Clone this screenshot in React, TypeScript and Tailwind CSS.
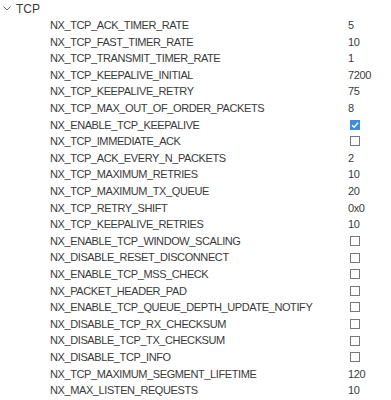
import React from 'react';

type Row = { name: string; value?: string; check?: boolean };

const rows: Row[] = [
  { name: 'NX_TCP_ACK_TIMER_RATE', value: '5' },
  { name: 'NX_TCP_FAST_TIMER_RATE', value: '10' },
  { name: 'NX_TCP_TRANSMIT_TIMER_RATE', value: '1' },
  { name: 'NX_TCP_KEEPALIVE_INITIAL', value: '7200' },
  { name: 'NX_TCP_KEEPALIVE_RETRY', value: '75' },
  { name: 'NX_TCP_MAX_OUT_OF_ORDER_PACKETS', value: '8' },
  { name: 'NX_ENABLE_TCP_KEEPALIVE', check: true },
  { name: 'NX_TCP_IMMEDIATE_ACK', check: false },
  { name: 'NX_TCP_ACK_EVERY_N_PACKETS', value: '2' },
  { name: 'NX_TCP_MAXIMUM_RETRIES', value: '10' },
  { name: 'NX_TCP_MAXIMUM_TX_QUEUE', value: '20' },
  { name: 'NX_TCP_RETRY_SHIFT', value: '0x0' },
  { name: 'NX_TCP_KEEPALIVE_RETRIES', value: '10' },
  { name: 'NX_ENABLE_TCP_WINDOW_SCALING', check: false },
  { name: 'NX_DISABLE_RESET_DISCONNECT', check: false },
  { name: 'NX_ENABLE_TCP_MSS_CHECK', check: false },
  { name: 'NX_PACKET_HEADER_PAD', check: false },
  { name: 'NX_ENABLE_TCP_QUEUE_DEPTH_UPDATE_NOTIFY', check: false },
  { name: 'NX_DISABLE_TCP_RX_CHECKSUM', check: false },
  { name: 'NX_DISABLE_TCP_TX_CHECKSUM', check: false },
  { name: 'NX_DISABLE_TCP_INFO', check: false },
  { name: 'NX_TCP_MAXIMUM_SEGMENT_LIFETIME', value: '120' },
  { name: 'NX_MAX_LISTEN_REQUESTS', value: '10' },
];

function Box({ on }: { on: boolean }) {
  if (on) {
    return (
      <span className="w-[10px] h-[10px] bg-[#3d8ee0] flex items-center justify-center">
        <svg width="8" height="8" viewBox="0 0 8 8">
          <path d="M1 4.2 L3.1 6.2 L7 1.8" stroke="#fff" strokeWidth="1.4" fill="none" />
        </svg>
      </span>
    );
  }
  return <span className="w-[10px] h-[10px] border border-[#7a7a7a] bg-white" />;
}

export default function App() {
  return (
    <div
      className="w-[391px] h-[400px] bg-white text-[#3a3a3a] text-[11px] tracking-[-0.4px] overflow-hidden"
      style={{ fontFamily: '"Liberation Sans", Arial, sans-serif' }}
    >
      <div className="h-[17px] flex items-center">
        <svg className="ml-[3px]" width="8" height="5" viewBox="0 0 8 5">
          <path d="M0.5 0.5 L4 4 L7.5 0.5" stroke="#6b6b6b" strokeWidth="1" fill="none" />
        </svg>
        <span className="ml-[5px] text-[12px] tracking-normal">TCP</span>
      </div>
      {rows.map((r) => (
        <div key={r.name} className="h-[16.6px] flex items-center">
          <span className="pl-[50px] w-[350px] whitespace-nowrap">{r.name}</span>
          {r.check === undefined ? (
            <span className="-ml-[2px]">{r.value}</span>
          ) : (
            <Box on={r.check} />
          )}
        </div>
      ))}
    </div>
  );
}
